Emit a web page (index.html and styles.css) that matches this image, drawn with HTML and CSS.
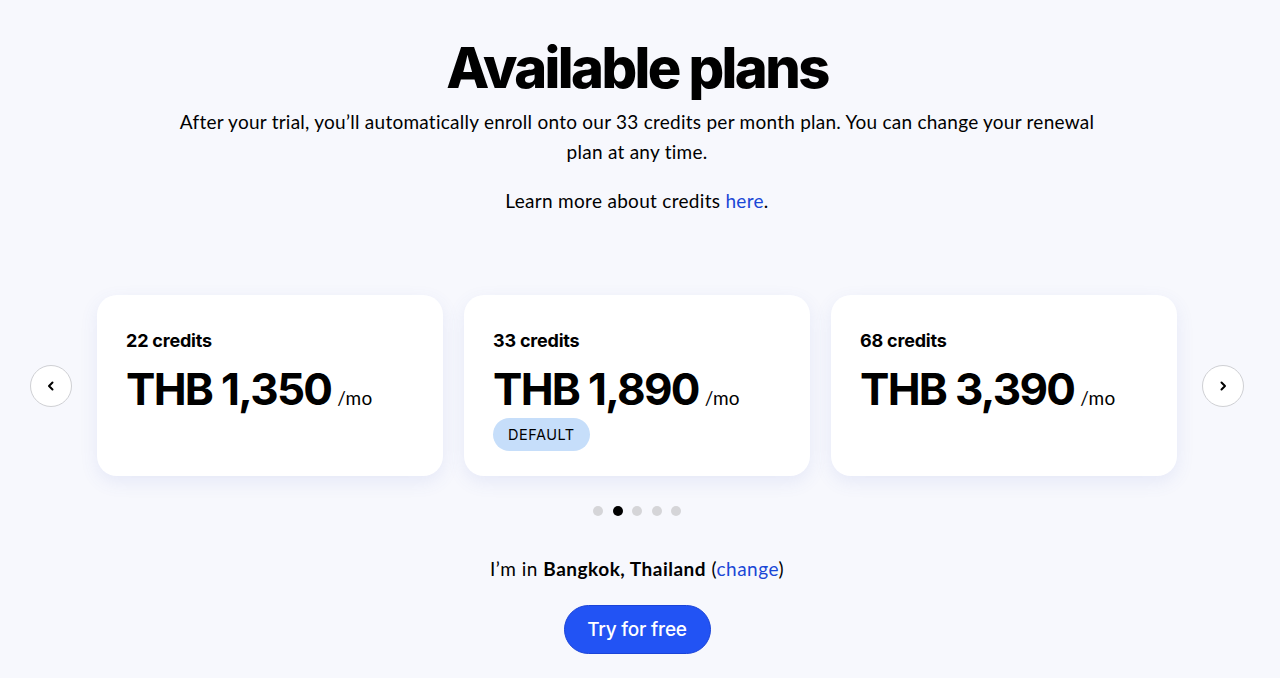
FILE: index.html
```html
<!DOCTYPE html>
<html lang="en">
<head>
<meta charset="utf-8">
<title>Available plans</title>
<link rel="stylesheet" href="styles.css">
</head>
<body>
<main class="page">
  <header class="intro">
    <h1 class="title">Available plans</h1>
    <p class="lead">After your trial, you’ll automatically enroll onto our 33 credits per month plan. You can change your renewal plan at any time.</p>
    <p class="learn">Learn more about credits <a class="link" href="#">here</a>.</p>
  </header>

  <section class="carousel">
    <button class="arrow" aria-label="Previous">
      <svg width="12" height="12" viewBox="0 0 12 12"><path d="M7.5 2.5 4 6l3.5 3.5" fill="none" stroke="#000" stroke-width="2" stroke-linecap="round" stroke-linejoin="round"/></svg>
    </button>
    <div class="cards">
      <div class="card">
        <div class="credits">22 credits</div>
        <div class="price"><span class="amount">THB 1,350</span><span class="per">/mo</span></div>
      </div>
      <div class="card">
        <div class="credits">33 credits</div>
        <div class="price"><span class="amount">THB 1,890</span><span class="per">/mo</span></div>
        <span class="badge">DEFAULT</span>
      </div>
      <div class="card">
        <div class="credits">68 credits</div>
        <div class="price"><span class="amount">THB 3,390</span><span class="per">/mo</span></div>
      </div>
    </div>
    <button class="arrow" aria-label="Next">
      <svg width="12" height="12" viewBox="0 0 12 12"><path d="M4.5 2.5 8 6l-3.5 3.5" fill="none" stroke="#000" stroke-width="2" stroke-linecap="round" stroke-linejoin="round"/></svg>
    </button>
  </section>

  <div class="dots">
    <span class="dot"></span>
    <span class="dot active"></span>
    <span class="dot"></span>
    <span class="dot"></span>
    <span class="dot"></span>
  </div>

  <p class="location">I’m in <strong>Bangkok, Thailand</strong> (<a class="link" href="#">change</a>)</p>
  <div class="cta-wrap"><button class="cta">Try for free</button></div>
</main>
</body>
</html>
```

FILE: styles.css
```css
* { box-sizing: border-box; }
html, body { margin: 0; padding: 0; }
body {
  background: #f7f8fd;
  color: #000;
  font-family: "Lato", "Inter", sans-serif;
  width: 1274px;
}
.page {
  display: flex;
  flex-direction: column;
  align-items: center;
}
.intro {
  display: flex;
  flex-direction: column;
  align-items: center;
  text-align: center;
}
.title {
  margin: 34px 0 0;
  font-family: "Inter", sans-serif;
  font-weight: 800;
  font-size: 56px;
  line-height: 68px;
  letter-spacing: -2.6px;
}
.lead {
  margin: 5px 0 0;
  width: 935px;
  font-size: 19px;
  line-height: 30px;
  letter-spacing: 0.25px;
}
.learn {
  margin: 19px 0 0;
  font-size: 19px;
  line-height: 30px;
  letter-spacing: 0.3px;
}
.link { color: #1a47d6; text-decoration: none; }

.carousel {
  margin-top: 79px;
  display: flex;
  align-items: center;
  gap: 25px;
}
.arrow {
  width: 42px;
  height: 42px;
  border-radius: 50%;
  border: 1px solid #cfd0d4;
  background: #fff;
  display: flex;
  align-items: center;
  justify-content: center;
  padding: 0;
}
.cards {
  display: flex;
  gap: 21px;
}
.card {
  width: 346px;
  height: 181px;
  background: #fff;
  border-radius: 20px;
  box-shadow: 0 6px 18px rgba(80, 100, 200, 0.10);
  padding: 35px 29px 0;
  display: flex;
  flex-direction: column;
  align-items: flex-start;
}
.credits {
  font-family: "Inter", sans-serif;
  font-weight: 700;
  font-size: 18px;
  line-height: 22px;
  letter-spacing: -0.2px;
}
.price {
  margin-top: 13px;
  display: flex;
  align-items: baseline;
  gap: 6px;
}
.amount {
  font-family: "Inter", sans-serif;
  font-weight: 700;
  font-size: 44px;
  line-height: 48px;
  letter-spacing: -1.7px;
}
.per {
  font-size: 19px;
  letter-spacing: 0.2px;
}
.badge {
  margin-top: 5px;
  background: #c6defa;
  border-radius: 17px;
  height: 33px;
  padding: 0 15px;
  display: inline-flex;
  align-items: center;
  font-family: "Inter", sans-serif;
  font-size: 14.5px;
  letter-spacing: 0.5px;
}

.dots {
  margin-top: 30px;
  display: flex;
  gap: 9.5px;
}
.dot {
  width: 10px;
  height: 10px;
  border-radius: 50%;
  background: #d5d5d8;
}
.dot.active { background: #000; }

.location {
  margin: 38px 0 0;
  font-size: 19px;
  line-height: 30px;
  letter-spacing: 0.5px;
}
.location strong { font-weight: 700; }
.cta-wrap { margin-top: 21px; }
.cta {
  width: 147px;
  height: 49px;
  border-radius: 25px;
  border: 1px solid #1b44d8;
  background: #2253f4;
  color: #fff;
  font-family: "Inter", sans-serif;
  font-size: 19px;
  font-weight: 500;
  padding: 0;
  letter-spacing: -0.2px;
}
```
